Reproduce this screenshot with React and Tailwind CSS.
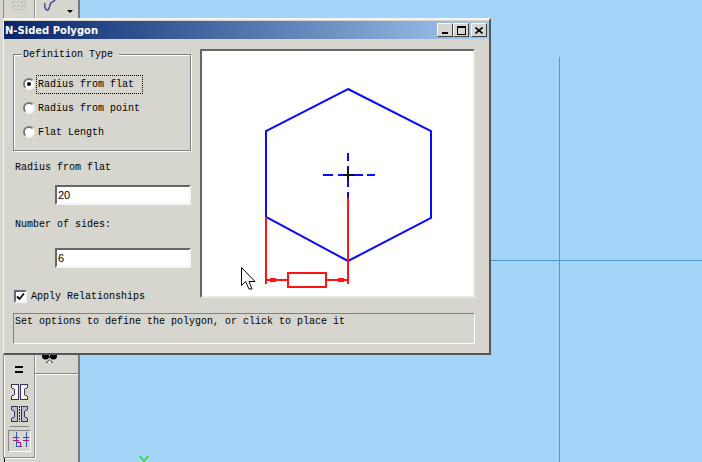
import React from "react";

const bevelOut = "border border-t-white border-l-white border-r-[#404040] border-b-[#404040]";

const Radio = ({ label, checked, focused }) => (
  <div className="flex h-6 items-center pl-[9px]">
    <span className="flex h-3 w-3 items-center justify-center rounded-full border-2 border-t-[#7a7a7a] border-l-[#7a7a7a] border-r-[#f2f2f2] border-b-[#f2f2f2] bg-white">
      {checked && <span className="h-1 w-1 rounded-full bg-black" />}
    </span>
    <span className={`ml-px pl-px ${focused ? "border border-dotted border-black py-[1px] pr-2" : "border border-transparent"}`}>
      {label}
    </span>
  </div>
);

const Field = ({ value }) => (
  <input
    readOnly
    defaultValue={value}
    className="ml-[42px] block h-5 w-[136px] border-2 border-t-[#666] border-l-[#666] border-r-[#f4f4f4] border-b-[#f4f4f4] bg-white pl-px font-['Liberation_Sans',sans-serif] text-[11px] text-black outline-none"
  />
);

const TitleButton = ({ children, className }) => (
  <div className={`flex h-[14px] w-4 items-center justify-center bg-[#d6d5ce] ${bevelOut} ${className || ""}`}>
    {children}
  </div>
);

const PolygonCanvas = () => (
  <div className="h-[249px] w-[275px] border-2 border-t-[#666] border-l-[#666] border-r-[#e8e8e4] border-b-[#e8e8e4] bg-white">
    <svg viewBox="202 51 271 245" className="block h-[245px] w-[271px]">
      <polygon points="348,89 431,131 431,218 348,261 266,217 266,131" fill="none" stroke="#0a0aff" strokeWidth="2" />
      <g stroke="#0a0aff" strokeWidth="2" shapeRendering="crispEdges">
        <path d="M348 153v8M348 166v21M348 192v6M323 174.5h10M338 174.5h25M367 174.5h8" />
      </g>
      <path d="M348 169v11M343 174.5h11" stroke="#111" strokeWidth="2" shapeRendering="crispEdges" />
      <g stroke="#ff1414" strokeWidth="2" fill="none" shapeRendering="crispEdges">
        <path d="M266 217v67M348 198v86M266 280h22M327 280h21" />
        <rect x="288" y="273" width="38" height="14" />
      </g>
      <rect x="270" y="278" width="6" height="4" fill="#ff1414" />
      <rect x="338" y="278" width="6" height="4" fill="#ff1414" />
      <path d="M241.5 267.5v18l4-4 3.5 7.5h3l-3-7.5h6z" fill="#fff" stroke="#000" strokeWidth="1" />
    </svg>
  </div>
);

const Dialog = () => (
  <div className="absolute left-[3px] top-[18px] h-[337px] w-[488px] border-t-2 border-r-2 border-b-2 border-l border-t-[#f4f3ee] border-r-[#555] border-b-[#555] border-l-[#f4f3ee] bg-[#d6d5ce] pt-px font-['Liberation_Mono',monospace] text-[10px] text-black">
    <div className="flex h-[18px] items-center justify-between bg-gradient-to-r from-[#0a246a] to-[#a6caf0] pr-[2px]">
      <span className="pl-px font-['DejaVu_Sans',sans-serif] text-[10px] font-bold text-white">N-Sided Polygon</span>
      <div className="flex items-center">
        <TitleButton>
          <span className="mt-[6px] h-[2px] w-[6px] bg-black" />
        </TitleButton>
        <TitleButton>
          <span className="h-[9px] w-[9px] border border-t-2 border-black" />
        </TitleButton>
        <TitleButton className="ml-[2px]">
          <svg viewBox="0 0 8 7" className="h-[7px] w-2">
            <path d="M0.5 0.5l7 6M7.5 0.5l-7 6" stroke="#000" strokeWidth="1.6" />
          </svg>
        </TitleButton>
      </div>
    </div>

    <div className="flex gap-[9px] pl-[9px] pt-[10px]">
      <div className="w-[178px]">
        <div className="relative mt-[5px] h-[97px] border border-[#808080] pt-[17px] shadow-[1px_1px_0_#fff,inset_1px_1px_0_#fff]">
          <span className="absolute -top-[8px] left-2 bg-[#d6d5ce] pl-px pr-[6px]">Definition Type</span>
          <Radio label="Radius from flat" checked focused />
          <Radio label="Radius from point" />
          <Radio label="Flat Length" />
        </div>
        <div className="mt-[10px] h-[14px] pl-[2px] leading-[14px]">Radius from flat</div>
        <div className="mt-[10px]"><Field value="20" /></div>
        <div className="mt-[11px] h-[14px] pl-[2px] pt-[2px] leading-[14px]">Number of sides:</div>
        <div className="mt-[18px]"><Field value="6" /></div>
        <div className="mt-[22px] flex h-[13px] items-center pl-px">
          <span className="flex h-[13px] w-[13px] items-center justify-center border-2 border-t-[#666] border-l-[#666] border-r-[#f4f4f4] border-b-[#f4f4f4] bg-white">
            <svg viewBox="0 0 9 9" className="h-[9px] w-[9px]">
              <path d="M1 4.5l2.5 2.5 4.5-5.5" fill="none" stroke="#000" strokeWidth="1.8" />
            </svg>
          </span>
          <span className="ml-1">Apply Relationships</span>
        </div>
      </div>
      <PolygonCanvas />
    </div>

    <div className="ml-[9px] mt-[10px] h-[31px] w-[462px] border border-t-[#808080] border-l-[#808080] border-r-white border-b-white pl-px pt-[2px] leading-[12px]">
      Set options to define the polygon, or click to place it
    </div>
  </div>
);

const Toolbar = () => (
  <div className="flex h-full w-20 shrink-0 flex-col border-r-2 border-r-[#7a7a7a] bg-[#d6d5ce] pl-[3px]">
    <div className="flex h-[18px] shrink-0">
      <div className="flex w-8 justify-center border-l border-r border-l-[#8a8a8a] border-r-[#8a8a8a]">
        <svg viewBox="0 0 14 10" className="h-[10px] w-[14px]" shapeRendering="crispEdges">
          <path d="M1 1h3M6 1h2M10 1h3M0 2v2M5 2v2M9 2v2M13 2v2M1 5h3M6 5h2M10 5h3M0 6v2M5 6v2M9 6v2M13 6v2M1 9h3M6 9h2M10 9h3" stroke="#b8b7b0" strokeWidth="1" />
        </svg>
      </div>
      <div className="relative flex-1 border-l border-l-white">
        <svg viewBox="44 0 13 13" className="ml-[8px] h-[13px] w-[13px]">
          <path d="M45 3c-1 4 1 8 3 7s1-5 3-7 3-1 4-3" fill="none" stroke="#4a4a90" strokeWidth="1.5" />
        </svg>
        <span className="absolute left-[31px] top-[10px] h-0 w-0 border-x-[3px] border-t-[3px] border-x-transparent border-t-black" />
      </div>
    </div>
    <div className="flex-1" />
    <div className="flex h-[104px] shrink-0">
      <div className="flex h-[104px] w-8 flex-col items-center border-l border-r border-b border-[#8a8a8a] shadow-[inset_1px_0_0_#fff,1px_1px_0_#fff]">
        <span className="mt-[12px] h-[7px] w-2 border-y-2 border-black" />
        <svg viewBox="0 0 17 16" className="mt-[11px] h-4 w-[17px]" shapeRendering="crispEdges">
          <path d="M0.5 0.5h7v15h-7v-3l3-2v-5l-3-2zM16.5 0.5h-7v15h7v-3l-3-2v-5l3-2z" fill="#fff4e4" stroke="#34346c" strokeWidth="1" />
        </svg>
        <svg viewBox="0 0 17 16" className="mt-[6px] h-4 w-[17px]" shapeRendering="crispEdges">
          <path d="M0.5 0.5h6v15h-6v-3l3-2v-5l-3-2zM16.5 0.5h-6v15h6v-3l-3-2v-5l3-2z" fill="#c0c0c4" stroke="#34346c" strokeWidth="1" />
          <path d="M8.5 0v16" stroke="#1010a0" strokeWidth="1" strokeDasharray="2 1" />
        </svg>
        <span className="mt-1 h-px w-[19px] bg-[#8a8a8a]" />
        <div className="mt-[3px] flex h-[22px] w-[23px] items-center justify-center border border-t-[#8a8a8a] border-l-[#8a8a8a] border-r-white border-b-white">
          <svg viewBox="0 0 21 20" className="h-5 w-[21px]" shapeRendering="crispEdges">
            <path d="M7.5 1v14.5h5M17.5 1v15" fill="none" stroke="#3a5ab0" strokeWidth="1" />
            <path d="M7.5 11.5h4v4" fill="none" stroke="#a01090" strokeWidth="1" />
            <path d="M4 6.5h6M4 9.5h6M14 6.5h6M14 9.5h6" stroke="#a01090" strokeWidth="1" />
          </svg>
        </div>
      </div>
      <div className="h-[20px] flex-1 border-b border-b-[#8a8a8a] shadow-[0_1px_0_#fff]">
        <svg viewBox="0 0 15 10" className="ml-[7px] h-[10px] w-[15px]">
          <circle cx="3.5" cy="2" r="3.5" fill="#000" />
          <circle cx="11.5" cy="2" r="3.5" fill="#000" />
          <path d="M7.5 2l-1 2h2z" fill="#000" />
          <path d="M7.5 5l-4 4h8z" fill="#555" />
          <path d="M7.5 6l-2 3h4z" fill="#fff" />
        </svg>
      </div>
    </div>
    <div className="ml-px h-[4px] w-px shrink-0 self-start bg-black" />
  </div>
);

export default function App() {
  return (
    <div className="relative flex h-[462px] w-[702px] overflow-hidden bg-[#a4d4f7]">
      <Toolbar />
      <div className="absolute left-[559px] top-[57px] h-[405px] w-px bg-[#4a9ad8]" />
      <div className="absolute left-[80px] top-[260px] h-px w-[622px] bg-[#4a9ad8]" />
      <svg viewBox="0 0 10 6" className="absolute left-[139px] top-[456px] h-[6px] w-[10px]">
        <path d="M0.5 0l4.5 5 4.5-5" fill="none" stroke="#20e020" strokeWidth="1.5" />
      </svg>
      <Dialog />
    </div>
  );
}
